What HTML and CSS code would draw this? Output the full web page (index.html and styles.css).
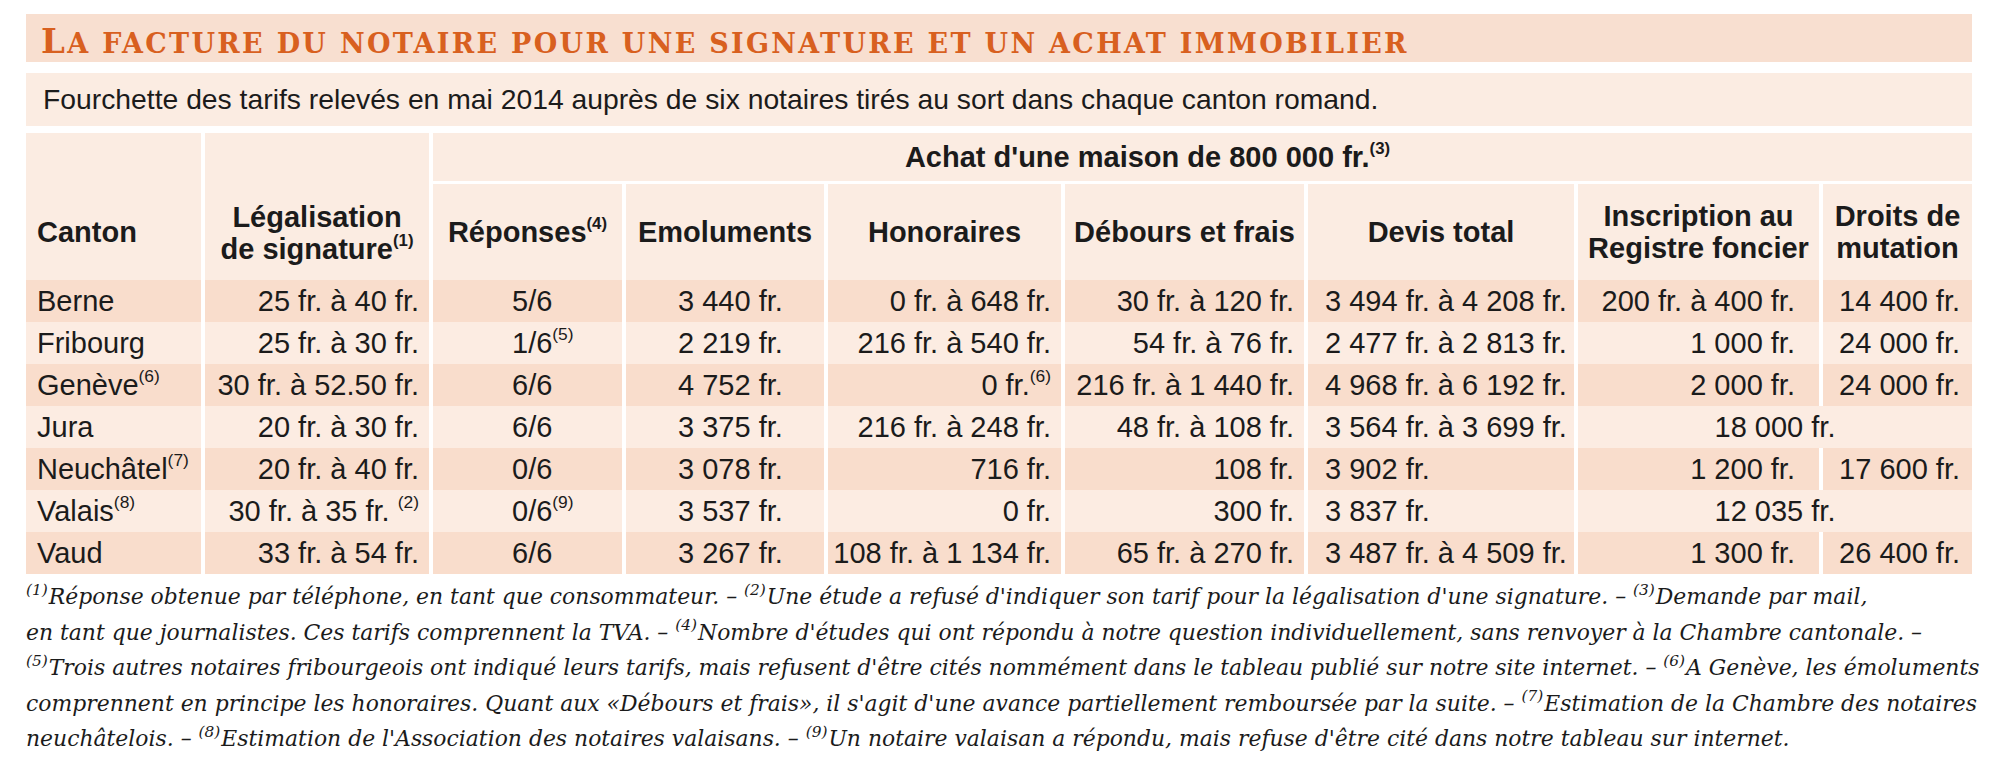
FILE: index.html
```html
<!DOCTYPE html>
<html lang="fr">
<head>
<meta charset="utf-8">
<title>La facture du notaire</title>
<link rel="stylesheet" href="styles.css">
</head>
<body>
<div class="page">
  <h1 class="title"><span class="big">L</span>a facture du notaire pour une signature et un achat immobilier</h1>
  <p class="subtitle">Fourchette des tarifs relevés en mai 2014 auprès de six notaires tirés au sort dans chaque canton romand.</p>

  <div class="table">
    <div class="head">
      <div class="hd hd-canton"><span>Canton</span></div>
      <div class="hd hd-legal"><span>Légalisation<br>de signature<sup class="sup">(1)</sup></span></div>
      <div class="hd hd-achat"><span>Achat d'une maison de 800&nbsp;000 fr.<sup class="sup">(3)</sup></span></div>
      <div class="hd hd-sub"><span>Réponses<sup class="sup">(4)</sup></span></div>
      <div class="hd hd-sub"><span>Emoluments</span></div>
      <div class="hd hd-sub"><span>Honoraires</span></div>
      <div class="hd hd-sub"><span>Débours et frais</span></div>
      <div class="hd hd-sub"><span>Devis total</span></div>
      <div class="hd hd-sub"><span>Inscription au<br>Registre foncier</span></div>
      <div class="hd hd-sub"><span>Droits de<br>mutation</span></div>
    </div>

    <div class="row dark">
      <div class="c c-canton">Berne</div>
      <div class="c c-legal">25 fr. à 40 fr.</div>
      <div class="c c-rep">5/6</div>
      <div class="c c-emol">3&nbsp;440 fr.</div>
      <div class="c c-hon">0 fr. à 648 fr.</div>
      <div class="c c-deb">30 fr. à 120 fr.</div>
      <div class="c c-devis">3&nbsp;494 fr. à 4&nbsp;208 fr.</div>
      <div class="c c-insc">200 fr. à 400 fr.</div>
      <div class="c c-droit">14&nbsp;400 fr.</div>
    </div>
    <div class="row light">
      <div class="c c-canton">Fribourg</div>
      <div class="c c-legal">25 fr. à 30 fr.</div>
      <div class="c c-rep">1/6<sup class="sup">(5)</sup></div>
      <div class="c c-emol">2&nbsp;219 fr.</div>
      <div class="c c-hon">216 fr. à 540 fr.</div>
      <div class="c c-deb">54 fr. à 76 fr.</div>
      <div class="c c-devis">2&nbsp;477 fr. à 2&nbsp;813 fr.</div>
      <div class="c c-insc">1&nbsp;000 fr.</div>
      <div class="c c-droit">24&nbsp;000 fr.</div>
    </div>
    <div class="row dark">
      <div class="c c-canton">Genève<sup class="sup">(6)</sup></div>
      <div class="c c-legal">30 fr. à 52.50 fr.</div>
      <div class="c c-rep">6/6</div>
      <div class="c c-emol">4&nbsp;752 fr.</div>
      <div class="c c-hon">0 fr.<sup class="sup">(6)</sup></div>
      <div class="c c-deb">216 fr. à 1&nbsp;440 fr.</div>
      <div class="c c-devis">4&nbsp;968 fr. à 6&nbsp;192 fr.</div>
      <div class="c c-insc">2&nbsp;000 fr.</div>
      <div class="c c-droit">24&nbsp;000 fr.</div>
    </div>
    <div class="row light">
      <div class="c c-canton">Jura</div>
      <div class="c c-legal">20 fr. à 30 fr.</div>
      <div class="c c-rep">6/6</div>
      <div class="c c-emol">3&nbsp;375 fr.</div>
      <div class="c c-hon">216 fr. à 248 fr.</div>
      <div class="c c-deb">48 fr. à 108 fr.</div>
      <div class="c c-devis">3&nbsp;564 fr. à 3&nbsp;699 fr.</div>
      <div class="c c-merged">18&nbsp;000 fr.</div>
    </div>
    <div class="row dark">
      <div class="c c-canton">Neuchâtel<sup class="sup">(7)</sup></div>
      <div class="c c-legal">20 fr. à 40 fr.</div>
      <div class="c c-rep">0/6</div>
      <div class="c c-emol">3&nbsp;078 fr.</div>
      <div class="c c-hon">716 fr.</div>
      <div class="c c-deb">108 fr.</div>
      <div class="c c-devis">3&nbsp;902 fr.</div>
      <div class="c c-insc">1&nbsp;200 fr.</div>
      <div class="c c-droit">17&nbsp;600 fr.</div>
    </div>
    <div class="row light">
      <div class="c c-canton">Valais<sup class="sup">(8)</sup></div>
      <div class="c c-legal">30 fr. à 35 fr. <sup class="sup">(2)</sup></div>
      <div class="c c-rep">0/6<sup class="sup">(9)</sup></div>
      <div class="c c-emol">3&nbsp;537 fr.</div>
      <div class="c c-hon">0 fr.</div>
      <div class="c c-deb">300 fr.</div>
      <div class="c c-devis">3&nbsp;837 fr.</div>
      <div class="c c-merged">12&nbsp;035 fr.</div>
    </div>
    <div class="row dark">
      <div class="c c-canton">Vaud</div>
      <div class="c c-legal">33 fr. à 54 fr.</div>
      <div class="c c-rep">6/6</div>
      <div class="c c-emol">3&nbsp;267 fr.</div>
      <div class="c c-hon">108 fr. à 1&nbsp;134 fr.</div>
      <div class="c c-deb">65 fr. à 270 fr.</div>
      <div class="c c-devis">3&nbsp;487 fr. à 4&nbsp;509 fr.</div>
      <div class="c c-insc">1&nbsp;300 fr.</div>
      <div class="c c-droit">26&nbsp;400 fr.</div>
    </div>
  </div>

  <div class="notes">
    <p class="line"><sup class="fn">(1)</sup>Réponse obtenue par téléphone, en tant que consommateur. – <sup class="fn">(2)</sup>Une étude a refusé d'indiquer son tarif pour la légalisation d'une signature. – <sup class="fn">(3)</sup>Demande par mail,</p>
    <p class="line">en tant que journalistes. Ces tarifs comprennent la TVA. – <sup class="fn">(4)</sup>Nombre d'études qui ont répondu à notre question individuellement, sans renvoyer à la Chambre cantonale. –</p>
    <p class="line"><sup class="fn">(5)</sup>Trois autres notaires fribourgeois ont indiqué leurs tarifs, mais refusent d'être cités nommément dans le tableau publié sur notre site internet. – <sup class="fn">(6)</sup>A Genève, les émoluments</p>
    <p class="line">comprennent en principe les honoraires. Quant aux «Débours et frais», il s'agit d'une avance partiellement remboursée par la suite. – <sup class="fn">(7)</sup>Estimation de la Chambre des notaires</p>
    <p class="line">neuchâtelois. – <sup class="fn">(8)</sup>Estimation de l'Association des notaires valaisans. – <sup class="fn">(9)</sup>Un notaire valaisan a répondu, mais refuse d'être cité dans notre tableau sur internet.</p>
  </div>
</div>
</body>
</html>
```

FILE: styles.css
```css
* { box-sizing: border-box; }

body {
  margin: 0;
  background: #ffffff;
  color: #1b1b1b;
  font-family: "Liberation Sans", Arial, sans-serif;
}

.page {
  width: 1972px;
  padding: 14px 0 0 26px;
}

.title {
  margin: 0;
  height: 48px;
  display: flex;
  align-items: baseline;
  padding: 7px 0 0 15px;
  background: #f8dfd0;
  color: #d8601f;
  font-family: "DejaVu Serif", "Liberation Serif", serif;
  font-weight: bold;
  text-transform: uppercase;
  font-size: 27px;
  letter-spacing: 2.3px;
  white-space: pre;
}

.title .big {
  font-size: 34px;
}

.subtitle {
  margin: 11px 0 0 0;
  height: 53px;
  display: flex;
  align-items: center;
  padding-left: 17px;
  background: #fbece2;
  font-size: 28.3px;
  white-space: nowrap;
}

.table {
  margin-top: 7px;
  display: flex;
  flex-direction: column;
  font-size: 29px;
  white-space: nowrap;
}

.head,
.row {
  display: grid;
  grid-template-columns: 175px 224px 189px 198px 233px 239px 266px 241px 149px;
  column-gap: 4px;
  background: #ffffff;
}

.head {
  grid-template-rows: 48px 3px 96px;
}

.row { height: 42px; }

.hd {
  background: #fbece2;
  font-weight: bold;
  font-size: 29px;
  line-height: 32px;
  display: flex;
  align-items: center;
  justify-content: center;
  text-align: center;
}

.hd-canton {
  grid-column: 1;
  grid-row: 1 / 4;
  justify-content: flex-start;
  padding-left: 11px;
  padding-top: 51px;
}

.hd-legal {
  grid-column: 2;
  grid-row: 1 / 4;
  padding-top: 53px;
}

.hd-achat {
  grid-column: 3 / 10;
  grid-row: 1;
  padding-right: 110px;
}

.hd-sub { grid-row: 3; }

.c {
  line-height: 42px;
}

.dark > .c { background: #f9ddcc; }
.light > .c { background: #fcece2; }

.c-canton { padding-left: 11px; }
.c-legal { text-align: right; padding-right: 10px; }
.c-rep { padding-left: 79px; }
.c-emol { padding-left: 52px; }
.c-hon { text-align: right; padding-right: 10px; }
.c-deb { text-align: right; padding-right: 10px; }
.c-devis { padding-left: 17px; }
.c-insc { text-align: right; padding-right: 24px; }
.c-droit { text-align: right; padding-right: 12px; }
.c-merged { grid-column: 8 / 10; text-align: center; }

.sup {
  font-size: 0.6em;
  vertical-align: 0.72em;
  line-height: 0;
  font-weight: inherit;
}

.hd .sup {
  font-size: 0.58em;
  vertical-align: 0.8em;
}

.notes {
  padding-top: 5px;
  font-family: "DejaVu Serif", "Liberation Serif", serif;
  font-style: italic;
  font-size: 21.9px;
  line-height: 35.5px;
  color: #1b1b1b;
}

.line {
  margin: 0;
  white-space: nowrap;
}

.fn {
  font-size: 0.7em;
  vertical-align: 0.6em;
  line-height: 0;
  margin-right: 1px;
}
```
